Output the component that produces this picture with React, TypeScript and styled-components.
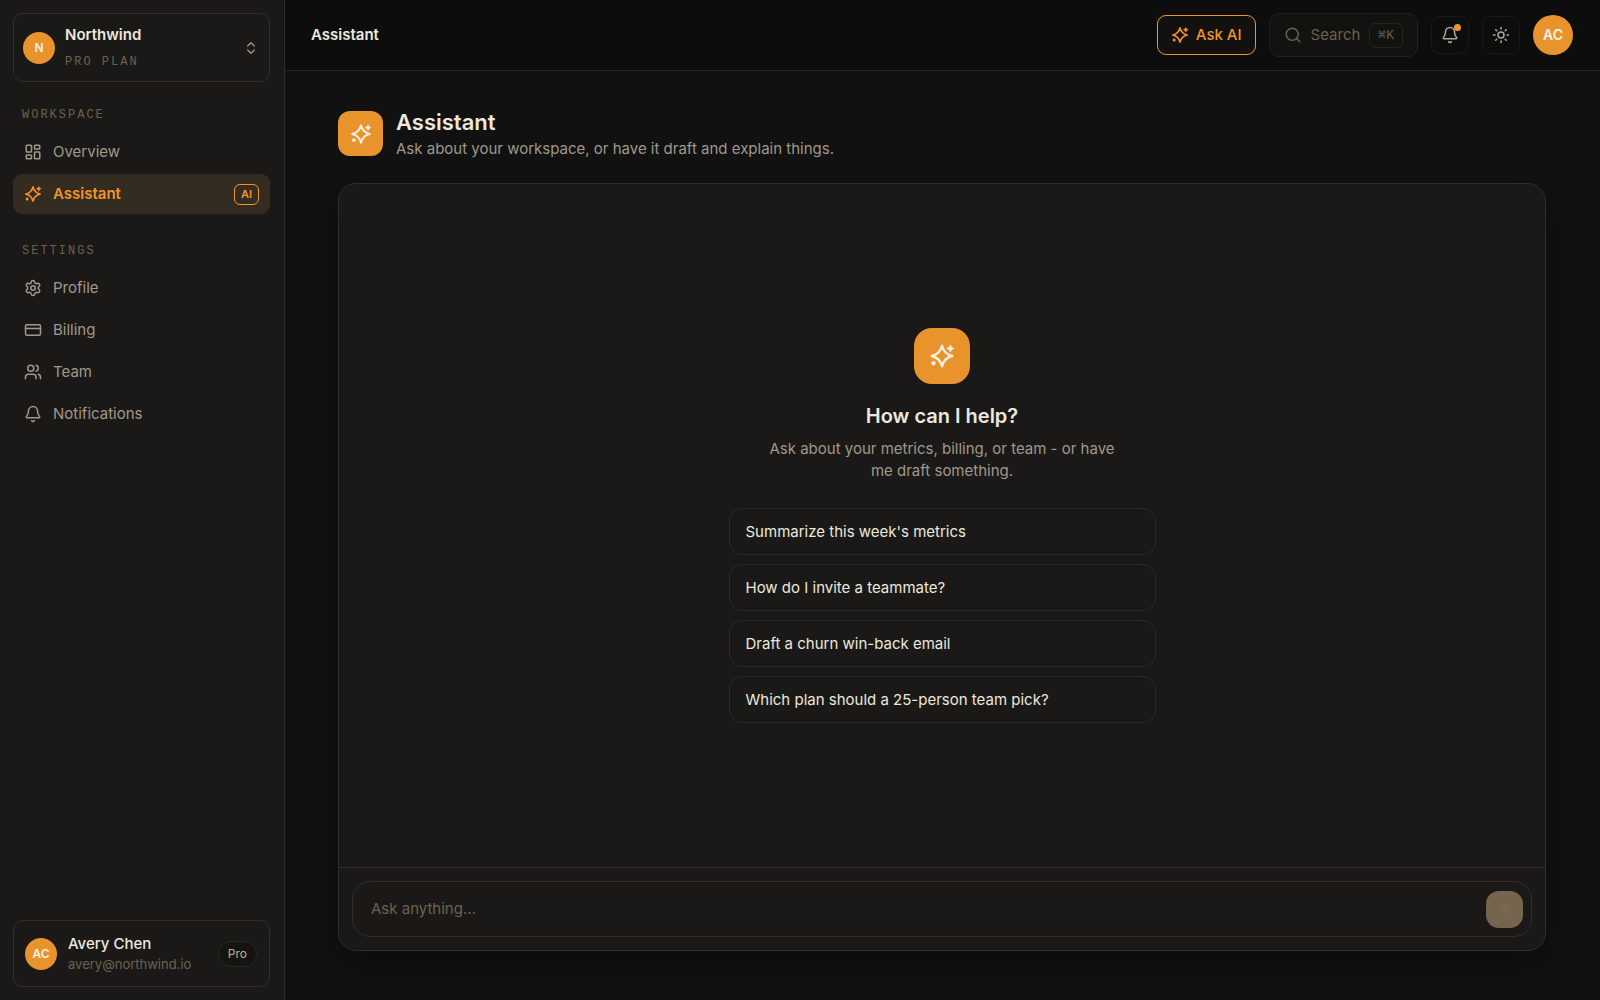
import React, { useState } from "react";
import styled, { createGlobalStyle, css } from "styled-components";
import {
  ArrowUp,
  Bell,
  ChevronsUpDown,
  CreditCard,
  LayoutDashboard,
  Search,
  Settings,
  Sun,
  Users,
} from "lucide-react";

const color = {
  page: "#111111",
  header: "#0d0d0e",
  surface: "#1b1917",
  line: "#312e27",
  faintLine: "#22211e",
  text: "#ece8de",
  muted: "#a0988a",
  dim: "#6b6150",
  accent: "#f0952a",
  fill: "#e9932c",
};

const GlobalStyle = createGlobalStyle`
  *, *::before, *::after { box-sizing: border-box; }
  body {
    margin: 0;
    background: ${color.page};
    color: ${color.text};
    font: 400 15px/22px Inter, "Liberation Sans", sans-serif;
  }
  button, input { font: inherit; color: inherit; }
  button { cursor: pointer; }
  h1, h2, p, ul { margin: 0; padding: 0; }
  ul { list-style: none; }
`;

const Shell = styled.div`
  display: grid;
  grid-template-columns: 285px minmax(0, 1fr);
  min-height: 100vh;
`;

const Sidebar = styled.aside`
  display: flex;
  flex-direction: column;
  padding: 13px 14px 13px 13px;
  background: ${color.surface};
  border-right: 1px solid #2e2c28;
`;

const cardFrame = css`
  display: flex;
  align-items: center;
  width: 100%;
  border: 1px solid ${color.line};
  border-radius: 10px;
  background: transparent;
  text-align: left;
`;

const WorkspaceButton = styled.button`
  ${cardFrame}
  gap: 10px;
  height: 69px;
  padding: 1px 10px 0 9px;
`;

const Stack = styled.span`
  display: flex;
  flex: 1;
  flex-direction: column;
  min-width: 0;
`;

const Avatar = styled.span<{ $size: number }>`
  display: grid;
  flex: none;
  place-items: center;
  width: ${(p) => p.$size}px;
  height: ${(p) => p.$size}px;
  border-radius: 50%;
  background: ${color.fill};
  color: #f7f2e8;
  font-size: ${(p) => (p.$size > 32 ? 14 : 12)}px;
  font-weight: 600;
`;

const Name = styled.span<{ $strong?: boolean }>`
  font-weight: ${(p) => (p.$strong ? 600 : 500)};
`;

const monoLabel = css`
  font-family: "Liberation Mono", monospace;
  font-size: 12px;
  letter-spacing: 2px;
  line-height: 22px;
  text-transform: uppercase;
  color: ${color.dim};
`;

const PlanLabel = styled.span`
  ${monoLabel}
  margin-top: 5px;
`;

const Nav = styled.nav`
  display: grid;
  gap: 26px;
  padding-top: 22px;
`;

const SectionTitle = styled.h2`
  ${monoLabel}
  margin: 0 0 6px 9px;
  font-weight: 400;
`;

const NavList = styled.ul`
  display: grid;
  gap: 2px;
`;

const NavLink = styled.a<{ $active?: boolean }>`
  display: flex;
  align-items: center;
  gap: 11px;
  height: 40px;
  padding: 0 11px;
  border-radius: 9px;
  color: ${(p) => (p.$active ? color.accent : color.muted)};
  background: ${(p) => (p.$active ? "#342c21" : "transparent")};
  font-weight: ${(p) => (p.$active ? 600 : 400)};
  text-decoration: none;
`;

const NavText = styled.span`
  flex: 1;
`;

const Tag = styled.span`
  padding: 0 6px;
  border: 1px solid ${color.accent};
  border-radius: 6px;
  font-size: 11px;
  font-weight: 600;
  line-height: 19px;
`;

const UserCard = styled.button`
  ${cardFrame}
  gap: 11px;
  height: 67px;
  margin-top: auto;
  padding: 0 12px 0 11px;
`;

const Email = styled.span`
  color: ${color.dim};
  font-size: 13px;
  line-height: 19px;
`;

const Pill = styled.span`
  padding: 0 9px;
  border: 1px solid #2a2823;
  border-radius: 13px;
  background: #151411;
  color: #b8b09f;
  font-size: 12px;
  line-height: 24px;
`;

const Content = styled.div`
  display: flex;
  flex-direction: column;
`;

const Header = styled.header`
  display: flex;
  align-items: center;
  gap: 13px;
  height: 71px;
  padding: 0 27px 0 26px;
  border-bottom: 1px solid #262522;
  background: ${color.header};
`;

const HeaderTitle = styled.span`
  margin-right: auto;
  font-weight: 600;
`;

const AskButton = styled.button`
  display: flex;
  align-items: center;
  gap: 7px;
  height: 40px;
  padding: 0 13px;
  border: 1px solid ${color.accent};
  border-radius: 9px;
  background: #12110f;
  color: ${color.accent};
  font-weight: 500;
`;

const SearchButton = styled.button`
  display: flex;
  align-items: center;
  gap: 9px;
  height: 44px;
  padding: 0 14px;
  border: 1px solid ${color.faintLine};
  border-radius: 10px;
  background: #121210;
  color: ${color.dim};
`;

const Shortcut = styled.kbd`
  padding: 0 8px;
  border: 1px solid #252420;
  border-radius: 6px;
  font: 13px/23px "Liberation Mono", "DejaVu Sans Mono", monospace;
`;

const IconButton = styled.button`
  position: relative;
  display: grid;
  place-items: center;
  width: 38px;
  height: 38px;
  padding: 0;
  border: 1px solid #1b1a18;
  border-radius: 9px;
  background: transparent;
  color: #b0a897;
`;

const Dot = styled.span`
  position: absolute;
  top: 7px;
  right: 7px;
  width: 7px;
  height: 7px;
  border-radius: 50%;
  background: ${color.accent};
`;

const AccountButton = styled.button`
  padding: 0;
  border: 0;
  border-radius: 50%;
  background: none;
`;

const Main = styled.main`
  display: flex;
  flex: 1;
  flex-direction: column;
  gap: 23px;
  padding: 36px 54px 49px 53px;
`;

const PageHead = styled.div`
  display: flex;
  align-items: center;
  gap: 13px;
`;

const SparkTile = styled.span<{ $size: number }>`
  display: grid;
  flex: none;
  place-items: center;
  width: ${(p) => p.$size}px;
  height: ${(p) => p.$size}px;
  border-radius: ${(p) => (p.$size > 50 ? 18 : 12)}px;
  background: ${color.fill};
  color: #f5efe4;
`;

const PageTitle = styled.h1`
  font-size: 22px;
  font-weight: 600;
  line-height: 31px;
`;

const Muted = styled.p`
  color: ${color.muted};
`;

const Chat = styled.section`
  display: flex;
  flex: 1;
  flex-direction: column;
  border: 1px solid ${color.line};
  border-radius: 18px;
  background: ${color.surface};
  box-shadow: 0 12px 32px rgba(0, 0, 0, 0.3);
`;

const Empty = styled.div`
  display: flex;
  flex: 1;
  flex-direction: column;
  align-items: center;
  justify-content: center;
  text-align: center;
`;

const EmptyTitle = styled.h2`
  margin: 18px 0 8px;
  font-size: 20px;
  font-weight: 600;
  line-height: 28px;
`;

const EmptyText = styled(Muted)`
  max-width: 350px;
`;

const Suggestions = styled.div`
  display: grid;
  gap: 9px;
  width: 427px;
  max-width: 100%;
  margin-top: 26px;
`;

const Suggestion = styled.button`
  min-height: 47px;
  padding: 0 16px;
  border: 1px solid #2c2a24;
  border-radius: 13px;
  background: transparent;
  text-align: left;
`;

const ComposerBar = styled.form`
  padding: 13px;
  border-top: 1px solid ${color.line};
`;

const Composer = styled.div`
  display: flex;
  align-items: center;
  height: 56px;
  padding: 0 8px 0 18px;
  border: 1px solid ${color.line};
  border-radius: 18px;
`;

const Prompt = styled.input`
  flex: 1;
  min-width: 0;
  padding: 0;
  border: 0;
  outline: 0;
  background: transparent;
  &::placeholder { color: ${color.dim}; opacity: 1; }
`;

const SendButton = styled.button`
  display: grid;
  place-items: center;
  width: 37px;
  height: 37px;
  padding: 0;
  border: 0;
  border-radius: 13px;
  background: #75644e;
  color: #7e6d56;
`;

function Sparkle({ size = 18 }: { size?: number }) {
  return (
    <svg width={size} height={size} viewBox="0 0 24 24" fill="none" aria-hidden="true">
      <path
        d="M12 2.500c1.300 5.400 4.100 8.200 9.500 9.500-5.400 1.300-8.200 4.100-9.500 9.500-1.300-5.400-4.100-8.200-9.500-9.500 5.400-1.300 8.200-4.100 9.500-9.500Z"
        stroke="currentColor"
        strokeWidth={2.2}
        strokeLinejoin="round"
      />
      <path
        d="m19.700 1.300 1.300 2.500 2.500 1.300-2.500 1.300-1.300 2.500-1.300-2.500-2.500-1.300 2.500-1.300Z"
        fill="currentColor"
      />
      <circle cx="4.200" cy="18.700" r="2" fill="currentColor" />
    </svg>
  );
}

const settingsLinks = [
  { label: "Profile", icon: Settings },
  { label: "Billing", icon: CreditCard },
  { label: "Team", icon: Users },
  { label: "Notifications", icon: Bell },
];

const suggestions = [
  "Summarize this week's metrics",
  "How do I invite a teammate?",
  "Draft a churn win-back email",
  "Which plan should a 25-person team pick?",
];

export default function App() {
  const [prompt, setPrompt] = useState("");

  return (
    <>
      <GlobalStyle />
      <Shell>
        <Sidebar>
          <WorkspaceButton type="button">
            <Avatar $size={32}>N</Avatar>
            <Stack>
              <Name $strong>Northwind</Name>
              <PlanLabel>Pro plan</PlanLabel>
            </Stack>
            <ChevronsUpDown size={16} color={color.muted} />
          </WorkspaceButton>
          <Nav aria-label="Main">
            <section>
              <SectionTitle>Workspace</SectionTitle>
              <NavList>
                <li>
                  <NavLink href="#overview">
                    <LayoutDashboard size={18} />
                    <NavText>Overview</NavText>
                  </NavLink>
                </li>
                <li>
                  <NavLink href="#assistant" aria-current="page" $active>
                    <Sparkle />
                    <NavText>Assistant</NavText>
                    <Tag>AI</Tag>
                  </NavLink>
                </li>
              </NavList>
            </section>
            <section>
              <SectionTitle>Settings</SectionTitle>
              <NavList>
                {settingsLinks.map(({ label, icon: Icon }) => (
                  <li key={label}>
                    <NavLink href={`#${label.toLowerCase()}`}>
                      <Icon size={18} />
                      <NavText>{label}</NavText>
                    </NavLink>
                  </li>
                ))}
              </NavList>
            </section>
          </Nav>
          <UserCard type="button">
            <Avatar $size={32}>AC</Avatar>
            <Stack>
              <Name>Avery Chen</Name>
              <Email>avery@northwind.io</Email>
            </Stack>
            <Pill>Pro</Pill>
          </UserCard>
        </Sidebar>
        <Content>
          <Header>
            <HeaderTitle>Assistant</HeaderTitle>
            <AskButton type="button">
              <Sparkle />
              Ask AI
            </AskButton>
            <SearchButton type="button">
              <Search size={18} />
              Search
              <Shortcut>⌘K</Shortcut>
            </SearchButton>
            <IconButton type="button" aria-label="Notifications">
              <Bell size={18} />
              <Dot />
            </IconButton>
            <IconButton type="button" aria-label="Toggle theme">
              <Sun size={18} />
            </IconButton>
            <AccountButton type="button" aria-label="Account">
              <Avatar $size={40}>AC</Avatar>
            </AccountButton>
          </Header>
          <Main>
            <PageHead>
              <SparkTile $size={45}>
                <Sparkle size={22} />
              </SparkTile>
              <div>
                <PageTitle>Assistant</PageTitle>
                <Muted>Ask about your workspace, or have it draft and explain things.</Muted>
              </div>
            </PageHead>
            <Chat aria-label="Chat">
              <Empty>
                <SparkTile $size={56}>
                  <Sparkle size={26} />
                </SparkTile>
                <EmptyTitle>How can I help?</EmptyTitle>
                <EmptyText>
                  Ask about your metrics, billing, or team - or have me draft something.
                </EmptyText>
                <Suggestions>
                  {suggestions.map((item) => (
                    <Suggestion key={item} type="button" onClick={() => setPrompt(item)}>
                      {item}
                    </Suggestion>
                  ))}
                </Suggestions>
              </Empty>
              <ComposerBar onSubmit={(event) => event.preventDefault()}>
                <Composer>
                  <Prompt
                    aria-label="Message"
                    placeholder="Ask anything…"
                    value={prompt}
                    onChange={(event) => setPrompt(event.target.value)}
                  />
                  <SendButton type="submit" aria-label="Send">
                    <ArrowUp size={17} />
                  </SendButton>
                </Composer>
              </ComposerBar>
            </Chat>
          </Main>
        </Content>
      </Shell>
    </>
  );
}
